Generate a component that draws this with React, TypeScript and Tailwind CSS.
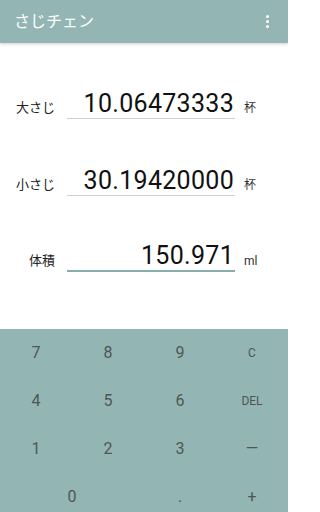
import React from 'react';

const font = { fontFamily: 'Roboto, "Noto Sans CJK JP", sans-serif' };

type Row = { label: string; value: string; unit: string; active?: boolean };

const rows: Row[] = [
  { label: '大さじ', value: '10.06473333', unit: '杯' },
  { label: '小さじ', value: '30.19420000', unit: '杯' },
  { label: '体積', value: '150.971', unit: 'ml', active: true },
];

function MenuDots() {
  return (
    <div className="flex flex-col items-center gap-[2px]">
      <span className="w-[3px] h-[3px] rounded-full bg-white" />
      <span className="w-[3px] h-[3px] rounded-full bg-white" />
      <span className="w-[3px] h-[3px] rounded-full bg-white" />
    </div>
  );
}

export default function App() {
  const keys: { label: string; span?: boolean; small?: boolean }[] = [
    { label: '7' }, { label: '8' }, { label: '9' }, { label: 'C', small: true },
    { label: '4' }, { label: '5' }, { label: '6' }, { label: 'DEL', small: true },
    { label: '1' }, { label: '2' }, { label: '3' }, { label: '—' },
    { label: '0', span: true }, { label: '.' }, { label: '+' },
  ];

  return (
    <div className="w-[288px] h-[512px] flex flex-col bg-white overflow-hidden" style={font}>
      {/* App bar */}
      <header className="h-[43px] shrink-0 bg-[#93b6b4] flex items-center justify-between pl-[14px] pr-[19px] shadow-[0_1px_3px_rgba(0,0,0,0.2)] relative z-10">
        <h1 className="text-white text-[16px] leading-none">さじチェン</h1>
        <MenuDots />
      </header>

      {/* Fields */}
      <main className="flex-1 flex flex-col pt-[47px]">
        {rows.map((row, i) => (
          <div
            key={row.label}
            className={`flex items-end ${i === 0 ? '' : i === 1 ? 'mt-[48px]' : 'mt-[46px]'}`}
          >
            <div className="w-[55px] text-right text-[13px] leading-[16px] text-[#222] pb-[3px]">
              {row.label}
            </div>
            <div
              className={`ml-[12px] w-[168px] pr-[1px] text-right text-[25px] leading-[28px] tracking-[0.3px] text-[#111] ${
                row.active ? 'border-b-2 border-[#88aeac]' : 'border-b border-[#d0d0d0]'
              }`}
            >
              {row.value}
            </div>
            <div className="ml-[9px] text-[12px] leading-[16px] text-[#333] pb-[3px]">{row.unit}</div>
          </div>
        ))}
      </main>

      {/* Keypad */}
      <section className="h-[183px] shrink-0 bg-[#93b6b4] overflow-hidden">
        <div className="grid grid-cols-4 auto-rows-[48px]">
          {keys.map((k) => (
            <button
              key={k.label}
              className={`flex items-center justify-center text-[#4d5755] ${
                k.span ? 'col-span-2' : ''
              } ${k.small ? 'text-[12px]' : 'text-[16px]'}`}
            >
              {k.label}
            </button>
          ))}
        </div>
      </section>
    </div>
  );
}
